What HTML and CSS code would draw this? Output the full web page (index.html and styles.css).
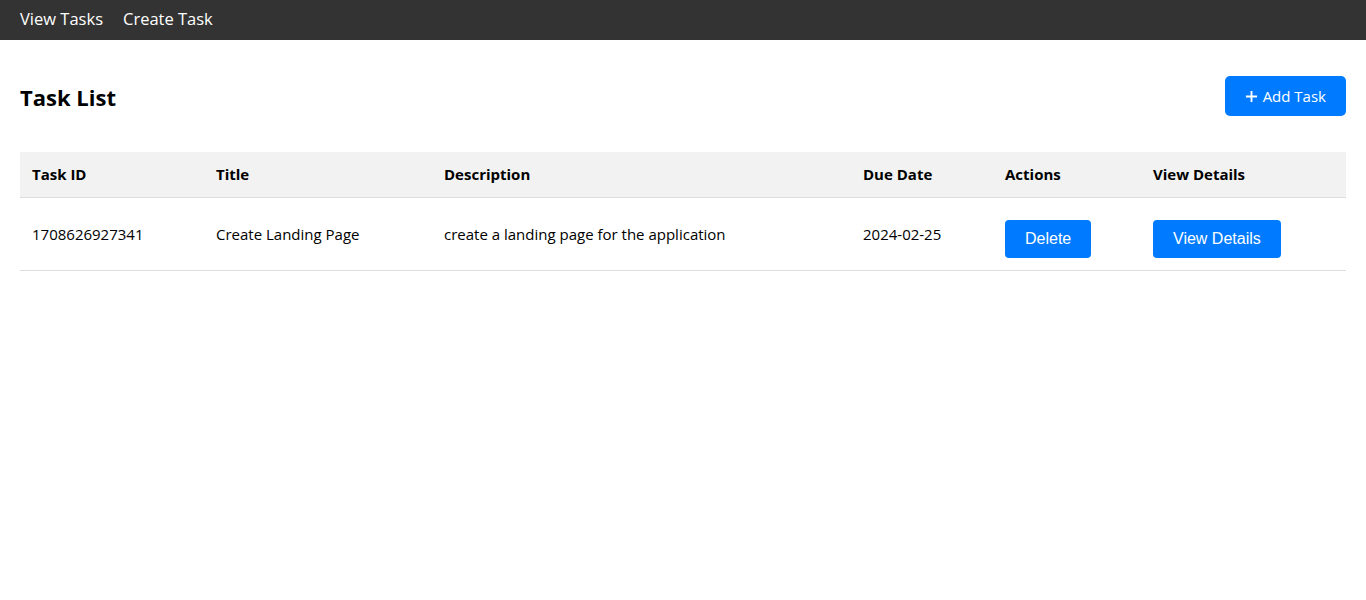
FILE: index.html
```html
<!DOCTYPE html>
<html lang="en">
<head>
<meta charset="utf-8">
<title>Task List</title>
<link rel="stylesheet" href="styles.css">
</head>
<body>
<nav class="navbar">
  <a class="nav-link" href="#">View Tasks</a>
  <a class="nav-link" href="#">Create Task</a>
</nav>
<main class="content">
  <div class="page-header">
    <h2 class="page-title">Task List</h2>
    <button class="add-btn" type="button">
      <svg class="plus" viewBox="0 0 14 14" width="14" height="14" aria-hidden="true"><path d="M7 1v12M1 7h12" stroke="#fff" stroke-width="2" fill="none"/></svg>
      <span>Add Task</span>
    </button>
  </div>
  <table class="task-table">
    <colgroup>
      <col class="c1"><col class="c2"><col class="c3"><col class="c4"><col class="c5"><col class="c6">
    </colgroup>
    <thead>
      <tr>
        <th>Task ID</th>
        <th>Title</th>
        <th>Description</th>
        <th>Due Date</th>
        <th>Actions</th>
        <th>View Details</th>
      </tr>
    </thead>
    <tbody>
      <tr>
        <td>1708626927341</td>
        <td>Create Landing Page</td>
        <td>create a landing page for the application</td>
        <td>2024-02-25</td>
        <td><button class="btn" type="button">Delete</button></td>
        <td><button class="btn" type="button">View Details</button></td>
      </tr>
    </tbody>
  </table>
</main>
</body>
</html>
```
FILE: styles.css
```css
* { box-sizing: border-box; }
body {
  margin: 0;
  font-family: "Open Sans", "Noto Sans", sans-serif;
  color: #000;
  background: #fff;
}
.navbar {
  height: 40px;
  background: #333;
  display: flex;
  align-items: center;
  gap: 20px;
  padding: 0 20px 3px;
}
.nav-link {
  color: #fff;
  text-decoration: none;
  font-size: 16.5px;
}
.content {
  padding: 20px;
}
.page-header {
  display: flex;
  align-items: center;
  justify-content: space-between;
  margin-bottom: 20px;
}
.page-title {
  margin: 21px 0 19px;
  font-size: 22px;
  line-height: 32px;
  font-weight: 700;
}
.add-btn {
  display: flex;
  align-items: center;
  gap: 5px;
  height: 40px;
  padding: 0 20px;
  background: #007bff;
  color: #fff;
  border: none;
  border-radius: 5px;
  font-family: "Open Sans", "Noto Sans", sans-serif;
  font-size: 15px;
}
.plus { display: block; width: 13px; height: 13px; }
.task-table {
  width: 100%;
  border-collapse: collapse;
  table-layout: fixed;
  font-size: 15px;
}
.c1 { width: 184px; }
.c2 { width: 228px; }
.c3 { width: 419px; }
.c4 { width: 142px; }
.c5 { width: 148px; }
.c6 { width: auto; }
.task-table th,
.task-table td {
  text-align: left;
  padding: 12px;
  line-height: 21px;
  border-bottom: 1px solid #ddd;
  vertical-align: middle;
}
.task-table th {
  background: #f2f2f2;
  font-weight: 700;
}
.btn {
  margin-top: 10px;
  height: 38px;
  padding: 0 20px;
  background: #007bff;
  color: #fff;
  border: none;
  border-radius: 4px;
  font-family: "Liberation Sans", Arial, sans-serif;
  font-size: 16px;
  vertical-align: top;
}
```
